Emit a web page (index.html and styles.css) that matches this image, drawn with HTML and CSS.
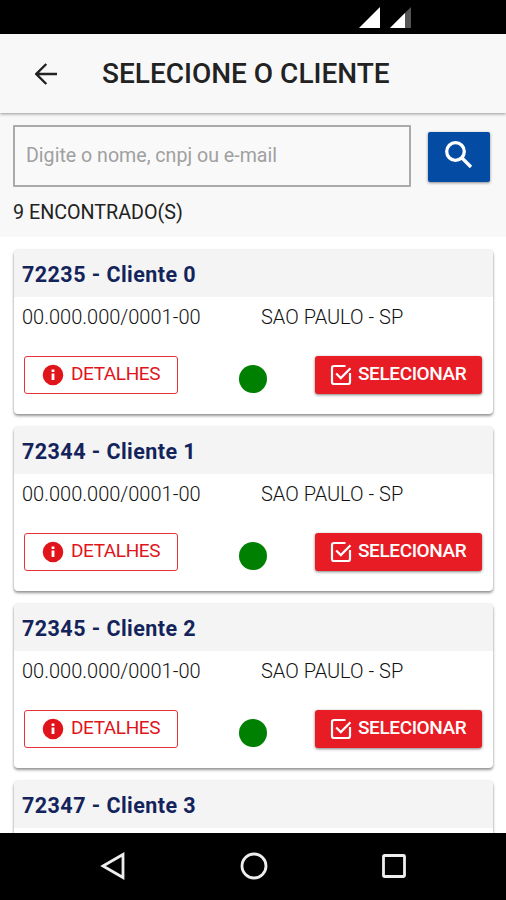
FILE: index.html
```html
<!DOCTYPE html>
<html lang="pt-BR">
	<head>
		<meta charset="utf-8">
		<title>Selecione o cliente</title>
		<link rel="stylesheet" href="styles.css">
	</head>

	<body>
		<!--Icons used more than once-->
		<svg class="sprite">
			<symbol id="info" viewBox="0 0 24 24">
				<path d="M12 1.700a10.300 10.300 0 1 0 0 20.600 10.300 10.300 0 0 0 0-20.600zm1.400 15.300h-2.800v-6.500h2.800v6.500zm0-8h-2.800V6.500h2.800V9z"/>
			</symbol>
			<symbol id="check" viewBox="0 0 22 22">
				<path d="M15.500 2H4Q2 2 2 4v14q0 2 2 2h14q2 0 2-2v-9" />
				<path d="M6.200 9.500l4.600 4.600L20.500 4.300" />
			</symbol>
		</svg>

		<div class="statusbar">
			<svg width="52" height="21" viewBox="0 0 52 21">
				<path d="M0 21L21 0v21z" fill="#fff"/>
				<path d="M31 21L52 0v21z" fill="#555"/>
				<path d="M31 21L46 6v15z" fill="#fff"/>
			</svg>
		</div>

		<div class="header">
			<svg width="22" height="22" viewBox="0 0 22 22">
				<path d="M22 11H1.500M11.300 1L1.300 11l10 10"/>
			</svg>
			<h1>SELECIONE O CLIENTE</h1>
		</div>

		<div class="search">
			<div class="searchRow">
				<input type="text" placeholder="Digite o nome, cnpj ou e-mail">
				<button class="searchButton">
					<svg width="28" height="28" viewBox="0 0 28 28">
						<circle cx="10.500" cy="10.500" r="8.800"/>
						<path d="M17 17l9 9"/>
					</svg>
				</button>
			</div>
			<p class="found">9 ENCONTRADO(S)</p>
		</div>

		<div class="list">
			<div class="card">
				<h2>72235 - Cliente 0</h2>
				<div class="info"><span class="cnpj">00.000.000/0001-00</span><span class="city">SAO PAULO - SP</span></div>
				<div class="actions">
					<button class="details"><svg><use href="#info"/></svg><span>DETALHES</span></button>
					<div class="dot"></div>
					<button class="select"><svg><use href="#check"/></svg><span>SELECIONAR</span></button>
				</div>
			</div>

			<div class="card">
				<h2>72344 - Cliente 1</h2>
				<div class="info"><span class="cnpj">00.000.000/0001-00</span><span class="city">SAO PAULO - SP</span></div>
				<div class="actions">
					<button class="details"><svg><use href="#info"/></svg><span>DETALHES</span></button>
					<div class="dot"></div>
					<button class="select"><svg><use href="#check"/></svg><span>SELECIONAR</span></button>
				</div>
			</div>

			<div class="card">
				<h2>72345 - Cliente 2</h2>
				<div class="info"><span class="cnpj">00.000.000/0001-00</span><span class="city">SAO PAULO - SP</span></div>
				<div class="actions">
					<button class="details"><svg><use href="#info"/></svg><span>DETALHES</span></button>
					<div class="dot"></div>
					<button class="select"><svg><use href="#check"/></svg><span>SELECIONAR</span></button>
				</div>
			</div>

			<!--Runs under the navigation bar-->
			<div class="card">
				<h2>72347 - Cliente 3</h2>
			</div>
		</div>

		<div class="navbar">
			<svg width="26" height="28" viewBox="0 0 26 28">
				<path d="M23 2.500v23L3 14z"/>
			</svg>
			<svg width="28" height="28" viewBox="0 0 28 28">
				<circle cx="14" cy="14" r="12"/>
			</svg>
			<svg width="26" height="26" viewBox="0 0 26 26">
				<rect x="2.500" y="2.500" width="21" height="21" rx="1"/>
			</svg>
		</div>
	</body>
</html>
```
FILE: styles.css
```css
* {
	box-sizing: border-box;
}

body {
	display: flex;
	flex-direction: column;
	height: 900px;
	margin: 0;
	overflow: hidden;
	font-family: Roboto, sans-serif;
	background-color: #fff;
}

h1, h2, p {
	margin: 0;
	white-space: nowrap;
}

button {
	padding: 0;
	border: none;
	font-family: Roboto, sans-serif;
}

svg {
	display: block;
	flex: none;
}

.sprite {
	display: none;
}

/*Top bars*/
.statusbar {
	flex: none;
	height: 34px;
	padding: 7px 0 0 359px;
	background-color: #000;
}

.header {
	display: flex;
	flex: none;
	align-items: center;
	height: 79px;
	padding-left: 35px;
	background-color: #f8f8f8;
	box-shadow: 0 1px 3px rgba(0, 0, 0, 0.4);
	z-index: 1;
}

.header svg {
	fill: none;
	stroke: #222;
	stroke-width: 2.4;
}

.header h1 {
	margin-left: 45px;
	font-size: 28px;
	font-weight: 500;
	color: #222;
}

/*Search*/
.search {
	flex: none;
	height: 124px;
	padding: 12px 16px 0 13px;
	background-color: #f8f8f8;
}

.searchRow {
	display: flex;
	align-items: flex-start;
}

.searchRow input {
	width: 398px;
	height: 62px;
	padding: 0 11px 1px;
	border: 2px solid #a9aaa9;
	border-radius: 1px;
	font-family: Roboto, sans-serif;
	font-size: 19.6px;
	background-color: #f9f9f9;
}

.searchRow input::placeholder {
	color: #a0a0a0;
}

.searchButton {
	display: flex;
	justify-content: center;
	width: 62px;
	height: 50px;
	margin: 7px 0 0 17px;
	padding-top: 9px;
	border-radius: 2px;
	background-color: #044ca3;
	box-shadow: 0 1px 3px rgba(0, 0, 0, 0.45);
}

.searchButton svg {
	fill: none;
	stroke: #fff;
	stroke-width: 3.3;
}

.found {
	margin-top: 14px;
	font-size: 19.7px;
	line-height: 24px;
	color: #222;
}

/*Client list*/
.list {
	flex: 1;
	min-height: 0;
	padding: 13px 13px 0 14px;
	overflow: hidden;
}

.card {
	height: 164px;
	margin-bottom: 13px;
	border-radius: 4px;
	background-color: #fff;
	box-shadow: 0 2px 3px rgba(0, 0, 0, 0.4), 0 0 2px rgba(0, 0, 0, 0.15);
	overflow: hidden;
}

.card h2 {
	height: 47px;
	padding-left: 8px;
	font-size: 21.5px;
	font-weight: 700;
	letter-spacing: 0.45px;
	line-height: 49px;
	color: #13235b;
	background-color: #f4f4f4;
}

.info {
	display: flex;
	padding: 8px 8px 0;
	font-size: 20px;
	font-weight: 300;
	line-height: 24px;
	color: #111;
}

.cnpj {
	width: 239px;
}

.actions {
	display: flex;
	align-items: flex-start;
	padding: 27px 11px 0 10px;
}

.details, .select {
	display: flex;
	align-items: center;
	height: 38px;
	border-radius: 3px;
	font-size: 19px;
	letter-spacing: -0.4px;
	white-space: nowrap;
}

.details span, .select span {
	padding-bottom: 3px;
}

.details {
	width: 154px;
	padding-left: 16px;
	border: 1px solid #e4333a;
	color: #e0151c;
	background-color: #fff;
}

.details svg {
	width: 24px;
	height: 24px;
	margin-right: 6px;
	fill: #e0151c;
}

.dot {
	width: 28px;
	height: 28px;
	margin: 9px 48px 0 61px;
	border-radius: 50%;
	background-color: #008000;
}

.select {
	width: 167px;
	padding-left: 15px;
	font-weight: 500;
	color: #fff;
	background-color: #e81c24;
	box-shadow: 0 1px 3px rgba(0, 0, 0, 0.5);
}

.select svg {
	width: 22px;
	height: 22px;
	margin-right: 6px;
	fill: none;
	stroke: #fff;
	stroke-width: 2.2;
}

/*Android buttons*/
.navbar {
	display: flex;
	flex: none;
	align-items: center;
	justify-content: space-between;
	height: 67px;
	padding: 0 99px 1px 100px;
	background-color: #000;
	z-index: 1;
}

.navbar svg {
	fill: none;
	stroke: #eee;
	stroke-width: 2.8;
}
```
